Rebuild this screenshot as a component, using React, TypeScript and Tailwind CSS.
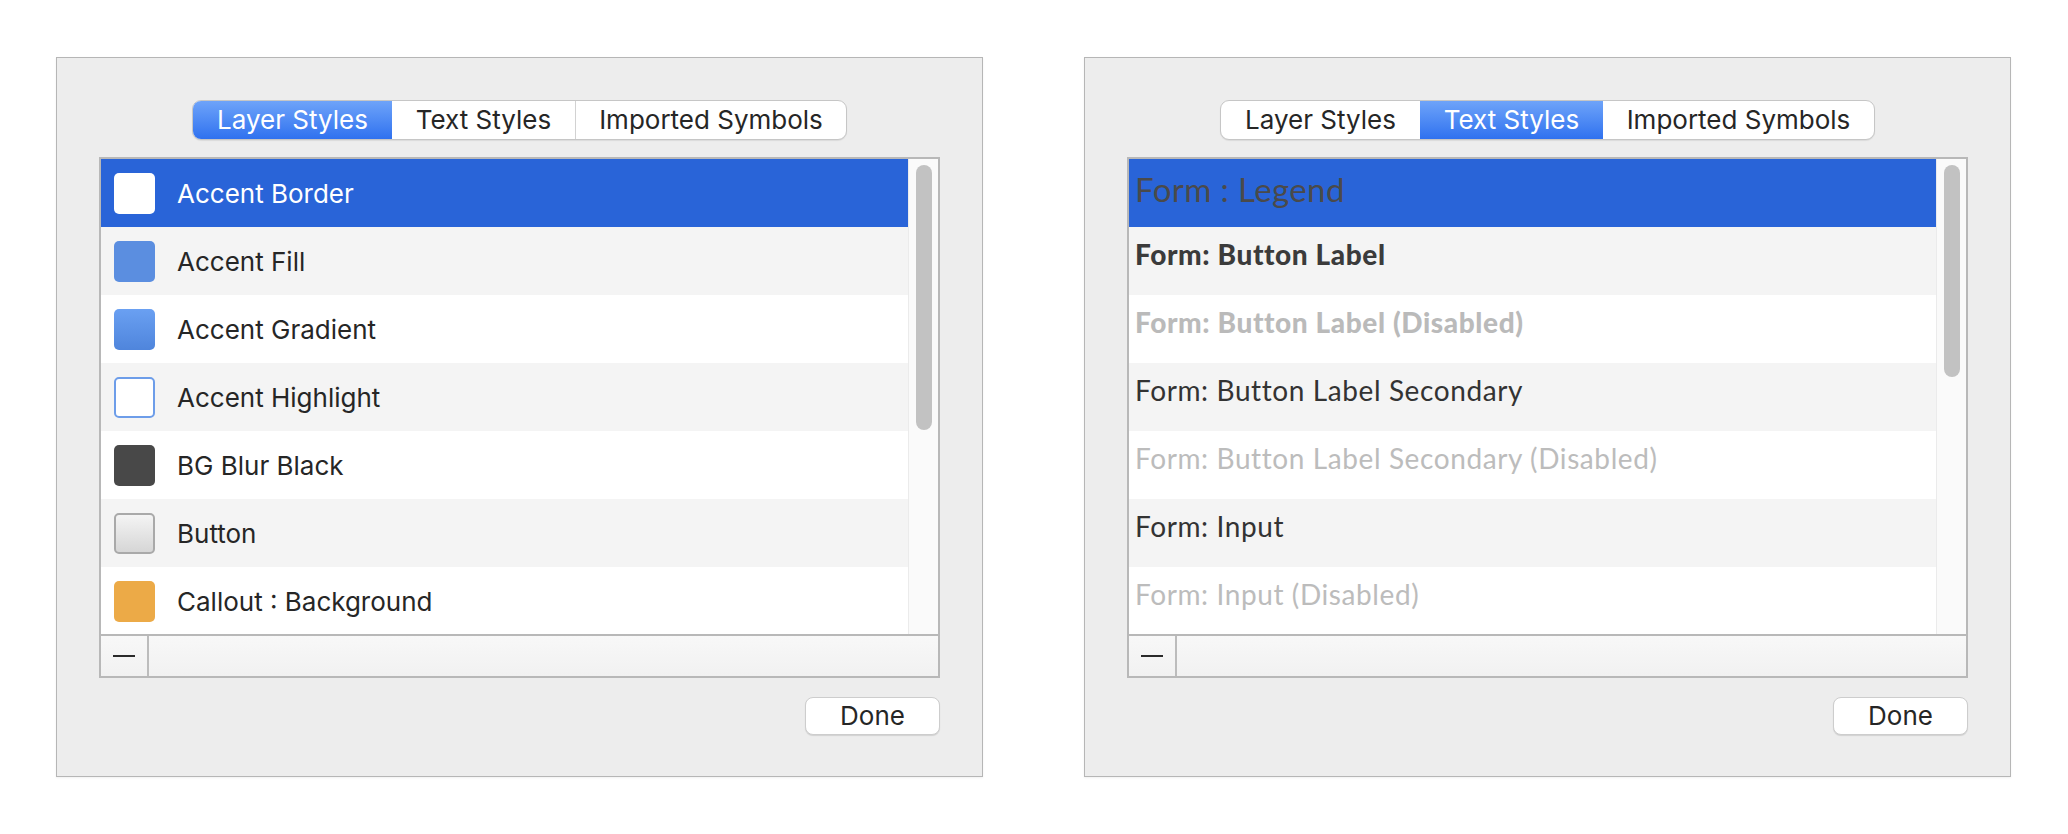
import { ReactNode } from 'react';

type Tab = 'layer' | 'text' | 'symbols';

const tabs: { id: Tab; label: string; width: string }[] = [
  { id: 'layer', label: 'Layer Styles', width: 'w-[199px]' },
  { id: 'text', label: 'Text Styles', width: 'w-[183px]' },
  { id: 'symbols', label: 'Imported Symbols', width: 'w-[271px]' },
];

const layerStyles: { name: string; swatch: string }[] = [
  { name: 'Accent Border', swatch: 'bg-white' },
  { name: 'Accent Fill', swatch: 'bg-[#5b8ee0]' },
  { name: 'Accent Gradient', swatch: 'bg-gradient-to-b from-[#6aa0f2] to-[#4f85dc]' },
  { name: 'Accent Highlight', swatch: 'bg-white border-2 border-[#6d9de9]' },
  { name: 'BG Blur Black', swatch: 'bg-[#484848]' },
  { name: 'Button', swatch: 'bg-gradient-to-b from-[#f4f4f4] to-[#d6d6d6] border-2 border-[#a9a9a9]' },
  { name: 'Callout : Background', swatch: 'bg-[#ecaa47]' },
];

const textStyles: { name: string; className: string }[] = [
  { name: 'Form : Legend', className: 'pb-[8px] text-[33px] tracking-[0.4px] text-[#4a4a4a]' },
  { name: 'Form: Button Label', className: 'pb-[15px] text-[28px] tracking-[0.6px] font-black text-[#3b3b3b]' },
  { name: 'Form: Button Label (Disabled)', className: 'pb-[15px] text-[28px] tracking-[0.6px] font-black text-[#bababa]' },
  { name: 'Form: Button Label Secondary', className: 'pb-[15px] text-[28px] tracking-[0.6px] text-[#333333]' },
  { name: 'Form: Button Label Secondary (Disabled)', className: 'pb-[15px] text-[28px] tracking-[0.6px] text-[#bcbcbc]' },
  { name: 'Form: Input', className: 'pb-[15px] text-[28px] tracking-[0.6px] text-[#333333]' },
  { name: 'Form: Input (Disabled)', className: 'pb-[15px] text-[28px] tracking-[0.6px] text-[#bcbcbc]' },
];

function SegmentedTabs({ active }: { active: Tab }) {
  return (
    <div className="self-center flex h-[40px] rounded-[9px] bg-white border border-[#c6c6c6] shadow-[0_1px_1px_rgba(0,0,0,0.08)] overflow-hidden">
      {tabs.map((tab, i) => {
        const selected = tab.id === active;
        const prevSelected = i > 0 && tabs[i - 1].id === active;
        return (
          <div
            key={tab.id}
            className={
              `${tab.width} flex items-center justify-center text-[26px] leading-none ` +
              (selected
                ? 'bg-gradient-to-b from-[#6ea3f9] to-[#2f71ef] text-white'
                : 'text-[#262626]') +
              (i > 0 && !selected && !prevSelected ? ' border-l border-[#d2d2d2]' : '')
            }
          >
            {tab.label}
          </div>
        );
      })}
    </div>
  );
}

function StyleList({ children, thumbHeight }: { children: ReactNode; thumbHeight: string }) {
  return (
    <div className="mt-[17px] h-[521px] border-2 border-[#b8b8b8] bg-white flex flex-col">
      <div className="h-[475px] flex overflow-hidden">
        <div className="flex-1 flex flex-col">{children}</div>
        <div className="w-[30px] bg-[#fafafa] border-l border-[#ebebeb] flex flex-col items-center pt-[6px]">
          <div className={`w-[16px] ${thumbHeight} rounded-full bg-[#c2c2c2]`} />
        </div>
      </div>
      <div className="h-[42px] border-t-2 border-[#b8b8b8] bg-gradient-to-b from-[#f8f8f8] to-[#f1f1f1] flex">
        <div className="w-[48px] border-r-2 border-[#bcbcbc] flex items-center justify-center">
          <div className="w-[22px] h-[2px] bg-[#2a2a2a]" />
        </div>
      </div>
    </div>
  );
}

function Row({ index, selected, children }: { index: number; selected: boolean; children: ReactNode }) {
  const bg = selected ? 'bg-[#2964d8]' : index % 2 === 1 ? 'bg-[#f4f4f4]' : 'bg-white';
  return <div className={`h-[68px] shrink-0 flex items-center ${bg}`}>{children}</div>;
}

function Panel({ active, children }: { active: Tab; children: ReactNode }) {
  return (
    <div className="w-[927px] h-[720px] bg-[#ededed] border border-[#b6b6b6] shadow-[0_1px_2px_rgba(0,0,0,0.06)] flex flex-col px-[42px] pt-[42px]">
      <SegmentedTabs active={active} />
      {children}
      <div className="mt-[19px] flex justify-end">
        <div className="w-[135px] h-[38px] bg-white rounded-[8px] border border-[#cdcdcd] shadow-[0_1px_1px_rgba(0,0,0,0.12)] flex items-center justify-center text-[26px] leading-none text-[#262626]">
          Done
        </div>
      </div>
    </div>
  );
}

export default function App() {
  return (
    <div
      className="w-[2068px] h-[834px] bg-white flex gap-[101px] pl-[56px] pt-[57px]"
      style={{ fontFamily: 'Inter, "Liberation Sans", sans-serif' }}
    >
      <Panel active="layer">
        <StyleList thumbHeight="h-[265px]">
          {layerStyles.map((style, i) => (
            <Row key={style.name} index={i} selected={i === 0}>
              <div className={`ml-[13px] w-[41px] h-[41px] rounded-[5px] ${style.swatch}`} />
              <span className={`ml-[22px] text-[26px] ${i === 0 ? 'text-white' : 'text-[#262626]'}`}>{style.name}</span>
            </Row>
          ))}
        </StyleList>
      </Panel>

      <Panel active="text">
        <StyleList thumbHeight="h-[212px]">
          {textStyles.map((style, i) => (
            <Row key={style.name} index={i} selected={i === 0}>
              <span
                className={`pl-[6px] leading-none ${style.className}`}
                style={{ fontFamily: 'Lato, "Noto Sans", sans-serif' }}
              >
                {style.name}
              </span>
            </Row>
          ))}
        </StyleList>
      </Panel>
    </div>
  );
}
